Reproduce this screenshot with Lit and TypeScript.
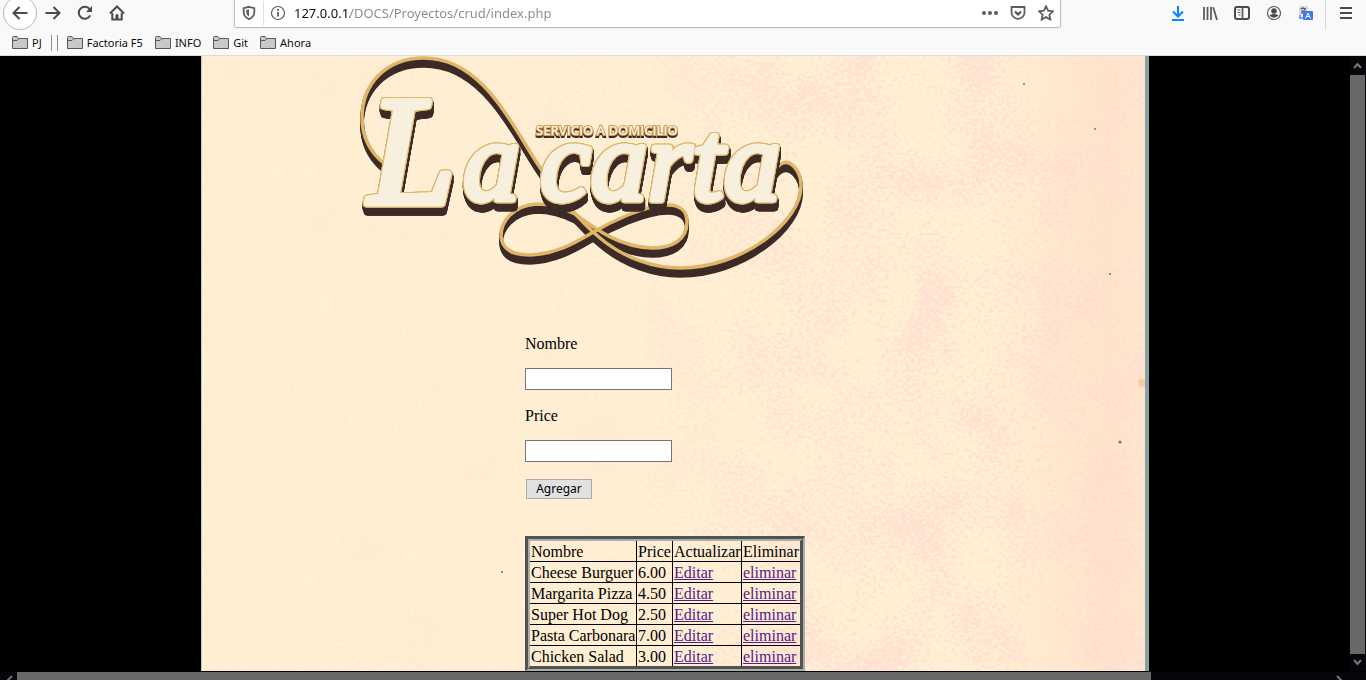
import { LitElement, html, css, svg } from "lit";
import { customElement, state } from "lit/decorators.js";

interface Dish {
  name: string;
  price: string;
}

const folderIcon = svg`<svg viewBox="0 0 16 14" width="16" height="14" aria-hidden="true">
  <path d="M.5 12.500V1.500Q.5.5 1.500.5H5l1.500 2H15.500V12.500Z" fill="#c9c9cb" stroke="#58585a"/>
  <path d="M.5 4.500H5L6.500 3" fill="none" stroke="#58585a"/></svg>`;

const icons = {
  back: svg`<path d="M15.500 8H1.500M7.500 2L1.500 8L7.500 14" class="line"/>`,
  forward: svg`<path d="M.5 8H14.500M8.500 2L14.500 8L8.500 14" class="line"/>`,
  reload: svg`<path d="M13.200 10.300A6 6 0 1 1 12.600 4.200" class="line"/><path d="M15 1V7H9Z" fill="#4a4a4c"/>`,
  home: svg`<path d="M1 8.500L8 1.500L15 8.500" class="line"/><path d="M3.300 8V14.600H12.700V8" class="line"/><path d="M6.500 14V10Q8 8 9.500 10V14Z" fill="#4a4a4c"/>`,
  shield: svg`<path d="M8 1.800L13.300 3.200V7.500Q13 12 8 14.200Q3 12 2.700 7.500V3.200Z" class="mid"/><path d="M8 4.300V11.500Q5.200 10 5.200 7V5Z" fill="#5d5d5f"/>`,
  info: svg`<circle cx="8" cy="8" r="6.500" class="thin"/><path d="M8 7V11.500M8 4V5.800" class="mid"/>`,
  dots: svg`<circle cx="2" cy="8" r="2" fill="#5d5d5f"/><circle cx="8" cy="8" r="2" fill="#5d5d5f"/><circle cx="14" cy="8" r="2" fill="#5d5d5f"/>`,
  pocket: svg`<path d="M1.500 2H14.500V7.500A6.500 6.300 0 0 1 1.500 7.500Z" class="mid"/><path d="M5 6.500L8 9.500L11 6.500" class="line"/>`,
  star: svg`<path d="M8 1.200L10.100 5.700L15 6.300L11.400 9.700L12.300 14.500L8 12.100L3.700 14.500L4.600 9.700L1 6.300L5.900 5.700Z" class="mid"/>`,
  download: svg`<path d="M8 1V11M3 6.500L8 11.500L13 6.500M2 15H14" fill="none" stroke="#0a84ff" stroke-width="2"/>`,
  library: svg`<path d="M2 2V15M5.500 2V15M9 2V15M11.200 2.200L15 15" class="mid"/>`,
  sidebar: svg`<rect x="1" y="2" width="14" height="12" rx="2" class="line"/><path d="M8.500 2V14" class="mid"/><path d="M3.500 5H6.500M3.500 7.500H6.500M4.500 10H6.500" class="thin"/>`,
  account: svg`<circle cx="8" cy="8" r="6.500" class="thin"/><circle cx="8" cy="6" r="2.800" fill="#4a4a4c"/><path d="M3.500 10.300Q8 7.700 12.500 10.300Q8 15 3.500 10.300Z" fill="#4a4a4c"/>`,
  translate: svg`<rect x="1" y="1" width="9" height="9" fill="#dadada"/><path d="M2.500 3.500H8M5 2V3.500M7 4Q6 7 3 8.500M3.500 5Q5 7.500 8 8.500" class="thin"/><path d="M2 10V13H5" fill="none" stroke="#6fa3f3" stroke-width="2"/><rect x="5" y="6" width="10" height="9" rx="1" fill="#3a7cf0"/><path d="M7.500 13.500L10 8L12.500 13.500M8.500 11.500H11.500" fill="none" stroke="#fff"/>`,
  menu: svg`<path d="M2 3H14M2 8H14M2 13H14" class="line"/>`,
};

@customElement("browser-icon")
class BrowserIcon extends LitElement {
  static properties = { name: {} };
  declare name: keyof typeof icons;

  static styles = css`
    :host { display: block; width: 16px; height: 16px; }
    svg { display: block; }
    .line { fill: none; stroke: #4a4a4c; stroke-width: 2; }
    .mid { fill: none; stroke: #5d5d5f; stroke-width: 1.800; }
    .thin { fill: none; stroke: #5d5d5f; stroke-width: 1.200; }
  `;

  render() {
    return html`<svg viewBox="0 0 16 16" width="16" height="16" aria-hidden="true">${icons[this.name]}</svg>`;
  }
}

@customElement("browser-bar")
class BrowserBar extends LitElement {
  static styles = css`
    :host {
      display: block; overflow: hidden; background: #f9f9fa;
      border-bottom: 1px solid #dcdcde; color: #0c0c0d;
      font-family: "Noto Sans", "Open Sans", sans-serif;
    }
    .nav { display: flex; align-items: center; height: 34px; margin-top: -4px; padding: 0 4px 0 3px; }
    button { all: unset; box-sizing: border-box; display: grid; place-items: center; width: 32px; height: 32px; }
    .back { width: 34px; height: 34px; border: 1px solid #b9b9bb; border-radius: 50%; background: #fff; }
    .address {
      flex: 1; display: flex; align-items: center; box-sizing: border-box; height: 30px;
      margin: 0 101px; padding-left: 6px; background: #fff;
      border: 1px solid #bdbdbf; border-radius: 2px; box-shadow: 0 1px 3px #0000000d;
    }
    .address button { width: 28px; height: 28px; }
    .address .shield { width: 16px; }
    .rule { width: 1px; height: 24px; margin: 0 6px; background: #dededf; }
    .address .info { width: 16px; }
    input {
      flex: 1; min-width: 0; height: 24px; margin-left: 8px; padding: 0; border: 0; outline: 0;
      font: 13px/24px "Noto Sans", "Open Sans", sans-serif;
      color: transparent; background: linear-gradient(90deg, #0c0c0d 56px, #8a8a8c 56px);
      background-clip: text; -webkit-background-clip: text;
    }
    .tools { display: flex; align-items: center; }
    .divider { width: 1px; height: 34px; margin: 0 4px 0 3px; background: #d7d7db; }
    .marks { display: flex; align-items: center; height: 25px; padding: 1px 12px 0; box-sizing: border-box; gap: 12px; font-size: 11px; line-height: 16px; }
    a { display: flex; align-items: center; gap: 4px; color: inherit; text-decoration: none; }
    .bars { width: 5px; height: 16px; margin: 0 -3px; border: solid #8d8d8f; border-width: 0 1px; }
  `;

  render() {
    const tool = (name: string, label: string) =>
      html`<button aria-label=${label}><browser-icon .name=${name}></browser-icon></button>`;
    const mark = (label: string) => html`<a href="#">${folderIcon}<span>${label}</span></a>`;
    return html`
      <div class="nav">
        <button class="back" aria-label="Atrás"><browser-icon .name=${"back"}></browser-icon></button>
        ${tool("forward", "Adelante")}${tool("reload", "Recargar")}${tool("home", "Inicio")}
        <div class="address">
          <button class="shield" aria-label="Protección"><browser-icon .name=${"shield"}></browser-icon></button>
          <span class="rule"></span>
          <button class="info" aria-label="Información"><browser-icon .name=${"info"}></browser-icon></button>
          <input aria-label="Dirección" value="127.0.0.1/DOCS/Proyectos/crud/index.php" />
          ${tool("dots", "Acciones")}${tool("pocket", "Pocket")}${tool("star", "Marcador")}
        </div>
        <div class="tools">
          ${tool("download", "Descargas")}${tool("library", "Catálogo")}${tool("sidebar", "Barra lateral")}
          ${tool("account", "Cuenta")}${tool("translate", "Traducir")}
          <span class="divider"></span>${tool("menu", "Menú")}
        </div>
      </div>
      <div class="marks">
        ${mark("PJ")}<span class="bars"></span>${mark("Factoria F5")}${mark("INFO")}${mark("Git")}${mark("Ahora")}
      </div>
    `;
  }
}

@customElement("carta-logo")
class CartaLogo extends LitElement {
  static styles = css`
    :host { display: block; }
    svg { display: block; }
    .flourish {
      fill: none; stroke: #dfb56a; stroke-width: 3.500;
      filter: drop-shadow(0 1px 0 #3b2a25) drop-shadow(0 3px 0 #3b2a25) drop-shadow(0 4px 0 #3b2a25);
    }
    .letters {
      font: italic 114px "Liberation Serif", serif;
      fill: #f8f0df; stroke: #f8f0df; stroke-width: 5; stroke-linejoin: round;
      filter: drop-shadow(1px 0 0 #dfb56a) drop-shadow(-1px 0 0 #dfb56a) drop-shadow(0 1px 0 #dfb56a)
        drop-shadow(0 -1px 0 #dfb56a) drop-shadow(0 1px 0 #3b2a25) drop-shadow(1px 3px 0 #3b2a25)
        drop-shadow(0 4px 0 #3b2a25);
    }
    .capital { font-size: 155px; stroke-width: 7; }
    .tagline {
      font: 600 13px "Open Sans", sans-serif;
      fill: #f8f0df; stroke: #cf9f50; stroke-width: 2; paint-order: stroke;
      filter: drop-shadow(0 2px 0 #3b2a25);
    }
  `;

  render() {
    return html`
      <svg viewBox="350 56 460 228" width="460" height="228" role="img" aria-label="La carta">
        <g class="flourish">
          <path d="M404 169C383 171 362 146 362 118C362 84 386 58 424 58C480 58 508 118 537 163C556 192 575 217 600 238C625 259 655 268 680 268C742 268 802 222 801 185C801 171 790 158 781 164C774 168 770 181 764 188"/>
          <path d="M590 234C610 222 645 205 668 205C682 205 687 213 687 222C687 240 672 248 652 248C620 247 597 230 575 214C560 206 545 204 536 204C512 206 501 222 501 236C502 250 514 255 530 255C555 254 573 244 590 234Z"/>
        </g>
        <g class="letters">
          <text x="369" y="203" class="capital">L</text>
          <text x="463" y="200">a</text>
          <text x="540" y="200">carta</text>
        </g>
        <text x="536" y="135" class="tagline">SERVICIO A DOMICILIO</text>
      </svg>
    `;
  }
}

@customElement("app-root")
class AppRoot extends LitElement {
  @state() private dishes: Dish[] = [
    { name: "Cheese Burguer", price: "6.00" },
    { name: "Margarita Pizza", price: "4.50" },
    { name: "Super Hot Dog", price: "2.50" },
    { name: "Pasta Carbonara", price: "7.00" },
    { name: "Chicken Salad", price: "3.00" },
  ];

  static styles = css`
    :host {
      display: flex; flex-direction: column; height: 100vh; overflow: hidden;
      background: #000; color: #000; font: 16px/18px "Liberation Serif", serif;
    }
    .view { flex: 1; min-height: 0; display: flex; }
    .page { flex: 1; min-width: 0; overflow: hidden; }
    .paper {
      display: grid; grid-template-columns: 100%; box-sizing: border-box; max-width: 948px;
      margin: 0 auto; min-height: 100%; border-left: 1px solid #b9d3bb; border-right: 4px solid #87a3a1;
      background: #ffefd3;
    }
    .grain { grid-area: 1 / 1; width: 100%; height: 100%; min-height: 0; contain: size; }
    .content { grid-area: 1 / 1; position: relative; }
    .logo { margin-left: 148px; }
    .entry { margin-left: 323px; }
    form { padding-top: 51px; }
    label { display: block; margin-bottom: 15px; }
    input {
      display: block; box-sizing: border-box; width: 147px; height: 22px; margin-bottom: 17px;
      border: 1px solid #767676; background: #fff; padding: 1px;
    }
    form button {
      display: block; width: 66px; height: 20px; margin-left: 1px; padding: 0; border: 1px solid #adadad;
      background: #e1e1e1; color: #000; font: 12px/16px "Noto Sans", "Open Sans", sans-serif;
    }
    .frame {
      width: max-content; margin-top: 37px; border: solid; border-width: 3px 2px 2px 3px;
      border-color: #4f5453 #a9adab #a9adab #4f5453;
    }
    .inset {
      border: solid; border-width: 2px 3px 3px 2px;
      border-color: #a9adab #4f5453 #4f5453 #a9adab;
    }
    table { border-collapse: separate; border-spacing: 0; table-layout: fixed; width: 270px; }
    .wname { width: 107px; }
    .wprice { width: 36px; }
    .wedit { width: 69px; }
    .wdrop { width: 58px; }
    th, td {
      height: 18px; padding: 2px 0 0 1px; text-align: left; font-weight: normal; white-space: nowrap;
      border-right: 1px solid #000; border-bottom: 1px solid #000;
    }
    th:last-child, td:last-child { border-right: 0; }
    tr:last-child td { border-bottom: 0; }
    a { color: #551a8b; }
    .vbar { display: flex; flex-direction: column; width: 15px; padding-right: 1px; background: #05050a; }
    .vbar svg, .hbar svg { display: block; flex: none; }
    .vthumb { flex: 1; background: #686868; }
    .hbar { display: flex; box-sizing: border-box; height: 9px; overflow: hidden; background: #05050a; border-top: 1px solid #000; }
    .hthumb { flex: 0 0 83%; background: #686868; }
    .track { flex: 1; }
    .chev { fill: none; stroke: #77777a; stroke-width: 2; }
  `;

  render() {
    return html`
      <browser-bar></browser-bar>
      <div class="view">
        <main class="page">
          <div class="paper">
            <svg class="grain" aria-hidden="true">
              <defs>
                <filter id="pink" x="0" y="0" width="100%" height="100%" color-interpolation-filters="sRGB">
                  <feTurbulence type="fractalNoise" baseFrequency="0.016 0.014" numOctaves="4" seed="5" result="broad"/>
                  <feTurbulence type="fractalNoise" baseFrequency="0.240 0.300" numOctaves="3" seed="21" result="fine"/>
                  <feComposite in="broad" in2="fine" operator="arithmetic" k2=".35" k3=".65"/>
                  <feColorMatrix values="0 0 0 0 1  0 0 0 0 .867  0 0 0 0 .82  8 0 0 0 -3.900"/>
                  <feComposite in2="SourceGraphic" operator="in"/>
                </filter>
                <linearGradient id="fade">
                  <stop offset="0" stop-color="#fff" stop-opacity=".15"/>
                  <stop offset=".45" stop-color="#fff" stop-opacity=".2"/>
                  <stop offset=".6" stop-color="#fff" stop-opacity=".75"/>
                  <stop offset="1" stop-color="#fff" stop-opacity=".9"/>
                </linearGradient>
                <linearGradient id="edge">
                  <stop offset=".84" stop-color="#ffddc4" stop-opacity="0"/>
                  <stop offset=".96" stop-color="#ffddc4" stop-opacity=".6"/>
                  <stop offset="1" stop-color="#ffe2cb" stop-opacity=".6"/>
                </linearGradient>
              </defs>
              <rect width="100%" height="100%" fill="url(#edge)"/>
              <rect width="100%" height="100%" fill="url(#fade)" filter="url(#pink)"/>
              <g fill="#8a6a48">
                <circle cx="822" cy="28" r="1"/><circle cx="893" cy="73" r="1"/><circle cx="908" cy="218" r="1"/>
                <circle cx="918" cy="386" r="1.500"/><circle cx="300" cy="516" r="1"/>
              </g>
              <circle cx="940" cy="327" r="4" fill="#f8bd80" opacity=".6"/>
              <path d="M190 92l4 5M195 94l3 8M199 105l4 6" stroke="#cdb8a5" fill="none"/>
            </svg>
            <div class="content">
              <carta-logo class="logo"></carta-logo>
              <div class="entry">
                <form @submit=${(e: Event) => e.preventDefault()}>
                  <label for="nombre">Nombre</label>
                  <input id="nombre" type="text" />
                  <label for="price">Price</label>
                  <input id="price" type="text" />
                  <button type="submit">Agregar</button>
                </form>
                <div class="frame"><div class="inset">
                  <table>
                    <colgroup><col class="wname" /><col class="wprice" /><col class="wedit" /><col class="wdrop" /></colgroup>
                    <thead>
                      <tr><th scope="col">Nombre</th><th scope="col">Price</th><th scope="col">Actualizar</th><th scope="col">Eliminar</th></tr>
                    </thead>
                    <tbody>
                      ${this.dishes.map((d) => html`<tr>
                        <td>${d.name}</td><td>${d.price}</td>
                        <td><a href="#editar">Editar</a></td><td><a href="#eliminar">eliminar</a></td>
                      </tr>`)}
                    </tbody>
                  </table>
                </div></div>
              </div>
            </div>
          </div>
        </main>
        <div class="vbar">
          <svg width="15" height="19"><path class="chev" d="M4 12L7.500 8L11 12"/></svg>
          <div class="vthumb"></div>
          <svg width="15" height="17"><path class="chev" d="M4 6L7.500 10L11 6"/></svg>
        </div>
      </div>
      <div class="hbar">
        <svg width="17" height="17"><path class="chev" d="M12 4L7 9L12 14"/></svg>
        <div class="hthumb"></div>
        <div class="track"></div>
        <svg width="34" height="17"><path class="chev" d="M5 4L10 9L5 14"/></svg>
      </div>
    `;
  }
}
